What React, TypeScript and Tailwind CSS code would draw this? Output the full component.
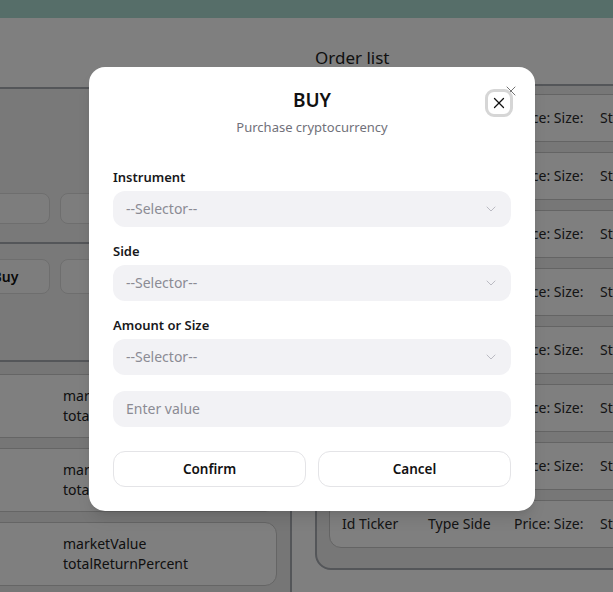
import { X, ChevronDown } from "lucide-react";

const orders = Array.from({ length: 8 });
const positions = Array.from({ length: 3 });

function Selector() {
  return (
    <div className="flex h-9 items-center justify-between rounded-xl bg-[#f2f2f5] pl-[13px] pr-3">
      <span className="text-sm text-[#8b8b94]">--Selector--</span>
      <ChevronDown size={16} strokeWidth={1.25} className="text-[#b0b0b8]" />
    </div>
  );
}

function Field({ label }: { label: string }) {
  return (
    <div className="flex flex-col gap-1">
      <label className="text-[13px] leading-5 font-semibold text-[#18181b]">{label}</label>
      <Selector />
    </div>
  );
}

export default function App() {
  return (
    <div className="relative h-[592px] w-[613px] overflow-hidden bg-white font-['Noto_Sans',sans-serif] text-[#333]">
      <div className="h-[18px] bg-[#acdcd2]" />
      <div className="flex h-[574px]">
        {/* left column */}
        <div className="flex w-[292px] shrink-0 flex-col">
          <div className="h-[69px] shrink-0" />
          <div className="h-[155px] shrink-0 border-t-2 border-r-2 border-[#a8acb3] bg-[#f3f3f3] pt-[104px]">
            <div className="flex gap-[10px]">
              <div className="-ml-[12px] h-[31px] w-[62px] rounded-lg border border-[#dcdcdc] bg-[#fbfbfb]" />
              <div className="h-[31px] w-[200px] rounded-lg border border-[#dcdcdc] bg-[#fbfbfb]" />
            </div>
          </div>
          <div className="h-[118px] shrink-0 border-t-2 border-r-2 border-[#a8acb3] bg-[#f3f3f3] pt-[15px]">
            <div className="flex gap-[10px]">
              <div className="-ml-[39px] flex h-[35px] w-[89px] items-center justify-center rounded-lg border border-[#dcdcdc] bg-[#fbfbfb] text-sm font-semibold text-[#111]">
                Buy
              </div>
              <div className="h-[35px] w-[200px] rounded-lg border border-[#dcdcdc] bg-[#fbfbfb]" />
            </div>
          </div>
          <div className="flex flex-1 flex-col gap-[10px] border-t-2 border-r-2 border-[#a8acb3] bg-[#ececec] pt-3">
            {positions.map((_, i) => (
              <div
                key={i}
                className="-ml-[20px] flex h-[64px] w-[297px] shrink-0 flex-col justify-center rounded-xl border border-[#cacaca] bg-white pl-[82px] text-sm leading-5 text-[#222]"
              >
                <span>marketValue</span>
                <span>totalReturnPercent</span>
              </div>
            ))}
          </div>
        </div>

        {/* right column */}
        <div className="flex-1 pl-[23px]">
          <h2 className="mt-[26px] text-[17px] leading-7 text-[#222]">Order list</h2>
          <div className="mt-3 flex h-[486px] w-[400px] flex-col gap-[10px] rounded-2xl border-2 border-[#a8acb3] bg-[#eeeeee] pt-2 pl-3">
            {orders.map((_, i) => (
              <div
                key={i}
                className="flex h-[48px] shrink-0 items-center rounded-xl border border-[#c8c8c8] bg-white pl-[12px] text-sm text-[#2a2a2a]"
              >
                <span className="w-[86px] shrink-0">Id Ticker</span>
                <span className="w-[86px] shrink-0">Type Side</span>
                <span className="w-[86px] shrink-0">Price: Size:</span>
                <span className="w-[86px] shrink-0">Status</span>
              </div>
            ))}
          </div>
        </div>
      </div>

      {/* dialog */}
      <div className="absolute inset-0 bg-black/50" />
      <div className="absolute left-[89px] top-[67px] w-[446px] rounded-2xl bg-white px-6 pt-[19px] pb-6 shadow-lg">
        <button className="absolute right-4 top-4 text-[#555]">
          <X size={16} strokeWidth={1.25} />
        </button>
        <button className="absolute right-[22px] top-[22px] flex h-7 w-7 items-center justify-center rounded-[9px] border-[3px] border-[#d6d6d6] bg-white text-[#111]">
          <X size={18} strokeWidth={1.75} />
        </button>
        <div className="flex flex-col items-center">
          <h1 className="text-[19px] leading-7 font-semibold text-[#111]">BUY</h1>
          <p className="mt-[3px] text-[13px] leading-5 text-[#71717a]">Purchase cryptocurrency</p>
        </div>
        <div className="mt-[30px] flex flex-col gap-[14px]">
          <Field label="Instrument" />
          <Field label="Side" />
          <Field label="Amount or Size" />
        </div>
        <div className="mt-4 flex h-9 items-center rounded-xl bg-[#f2f2f5] px-[13px] text-sm text-[#8b8b94]">
          Enter value
        </div>
        <div className="mt-6 grid grid-cols-2 gap-3">
          <button className="h-9 rounded-xl border border-[#e4e4e7] bg-white text-[13.5px] font-semibold text-[#111]">
            Confirm
          </button>
          <button className="h-9 rounded-xl border border-[#e4e4e7] bg-white text-[13.5px] font-semibold text-[#111]">
            Cancel
          </button>
        </div>
      </div>
    </div>
  );
}
